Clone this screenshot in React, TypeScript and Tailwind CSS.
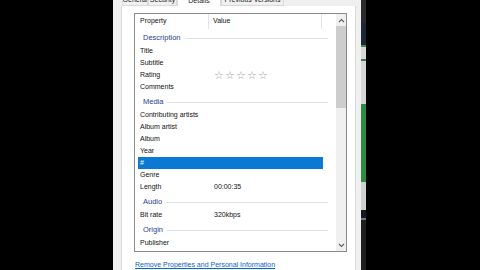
import React from "react"

const font = { fontFamily: '"Liberation Sans", Arial, sans-serif' }

type Row = { kind: "group"; label: string } | { kind: "row"; label: string; value?: string; stars?: boolean; selected?: boolean }

const rows: Row[] = [
	{ kind: "group", label: "Description" },
	{ kind: "row", label: "Title" },
	{ kind: "row", label: "Subtitle" },
	{ kind: "row", label: "Rating", stars: true },
	{ kind: "row", label: "Comments" },
	{ kind: "group", label: "Media" },
	{ kind: "row", label: "Contributing artists" },
	{ kind: "row", label: "Album artist" },
	{ kind: "row", label: "Album" },
	{ kind: "row", label: "Year" },
	{ kind: "row", label: "#", selected: true },
	{ kind: "row", label: "Genre" },
	{ kind: "row", label: "Length", value: "00:00:35" },
	{ kind: "group", label: "Audio" },
	{ kind: "row", label: "Bit rate", value: "320kbps" },
	{ kind: "group", label: "Origin" },
	{ kind: "row", label: "Publisher" },
]

const tabs = [
	{ name: "General", w: "w-[26px]" },
	{ name: "Security", w: "w-[29px]" },
	{ name: "Details", w: "w-[44px]", active: true },
	{ name: "Previous Versions", w: "w-[63px]" },
]

const Stars = () => (
	<div className="flex gap-[1px] text-[11px] leading-none text-[#a8a8a8]">
		{[0, 1, 2, 3, 4].map((i) => (
			<span key={i} className="w-[10px] text-center">
				☆
			</span>
		))}
	</div>
)

const Chevron = ({ up }: { up?: boolean }) => (
	<svg width="7" height="5" viewBox="0 0 7 5">
		<path d={up ? "M1 4 L3.5 1.5 L6 4" : "M1 1 L3.5 3.5 L6 1"} fill="none" stroke="#606060" strokeWidth="1.1" />
	</svg>
)

export default function App() {
	return (
		<div className="w-[480px] h-[270px] bg-black flex overflow-hidden text-[7px] text-[#111]" style={font}>
			<div className="w-[113px] shrink-0" />
			<div className="w-[248px] shrink-0 bg-[#f0f0f0] flex flex-col pl-[8px] pr-[5px]">
				{/* tab strip, cut at the top of the picture */}
				<div className="h-[6px] shrink-0 flex items-end overflow-hidden pl-[1px]">
					{tabs.map((t) => (
						<div
							key={t.name}
							className={`${t.w} shrink-0 flex items-end justify-center overflow-hidden border-x border-[#d9d9d9] ${
								t.active ? "h-[6px] bg-white" : "h-[6px] bg-[#f0f0f0] border-b"
							}`}
						>
							<span className="leading-[8px] mb-[1px] whitespace-nowrap text-[#222]">{t.name}</span>
						</div>
					))}
				</div>
				<div className="flex-1 bg-white border border-[#d9d9d9] border-t-0 flex flex-col">
					<div className="ml-[12px] mt-[7px] w-[213px] h-[239px] shrink-0 border border-[#8a8a8a] flex overflow-hidden">
						<div className="flex-1 flex flex-col overflow-hidden">
							<div className="h-[15px] shrink-0 flex items-center">
								<div className="w-[74px] pl-[5px] h-full flex items-center border-r border-[#e5e5e5]">Property</div>
								<div className="w-[113px] pl-[4px] h-full flex items-center border-r border-[#e5e5e5]">Value</div>
							</div>
							{rows.map((r) =>
								r.kind === "group" ? (
									<div key={r.label} className="h-[16px] shrink-0 flex items-center pt-[2px] pl-[8px] pr-[8px]">
										<span className="text-[#2b3e8c] text-[7.5px]">{r.label}</span>
										<div className="flex-1 ml-[4px] h-px bg-[#dde3ec]" />
									</div>
								) : (
									<div
										key={r.label}
										className={`ml-[3px] w-[185px] h-[12px] shrink-0 flex items-center ${
											r.selected ? "bg-[#0b78d4] text-white" : ""
										}`}
									>
										<span className="w-[76px] pl-[2px] whitespace-nowrap">{r.label}</span>
										{r.stars ? <Stars /> : <span>{r.value}</span>}
									</div>
								)
							)}
						</div>
						<div className="w-[10px] shrink-0 bg-[#f0f0f0] flex flex-col">
							<div className="h-[12px] flex items-center justify-center">
								<Chevron up />
							</div>
							<div className="h-[82px] bg-[#cdcdcd]" />
							<div className="flex-1" />
							<div className="h-[12px] flex items-center justify-center">
								<Chevron />
							</div>
						</div>
					</div>
					<div className="ml-[13px] mt-[8px]">
						<span className="text-[#0a64c8] underline whitespace-nowrap">Remove Properties and Personal Information</span>
					</div>
				</div>
			</div>
			{/* sliver of the window behind */}
			<div className="w-[5px] shrink-0 flex flex-col">
				<div className="h-[23px] bg-[#2a2a2a]" />
				<div className="h-[22px] bg-[#1c2636]" />
				<div className="h-[2px] bg-[#3f8a56]" />
				<div className="h-[12px] bg-[#d8d8d8]" />
				<div className="h-[2px] bg-[#3f7a50]" />
				<div className="h-[43px] bg-[#d6d6d6]" />
				<div className="h-[78px] bg-[#2e8b45]" />
				<div className="h-[28px] bg-[#cfcfcf]" />
				<div className="h-[8px] bg-[#151820]" />
				<div className="h-[2px] bg-[#6a7890]" />
				<div className="flex-1 bg-[#1e1e1e]" />
			</div>
			<div className="flex-1" />
		</div>
	)
}
